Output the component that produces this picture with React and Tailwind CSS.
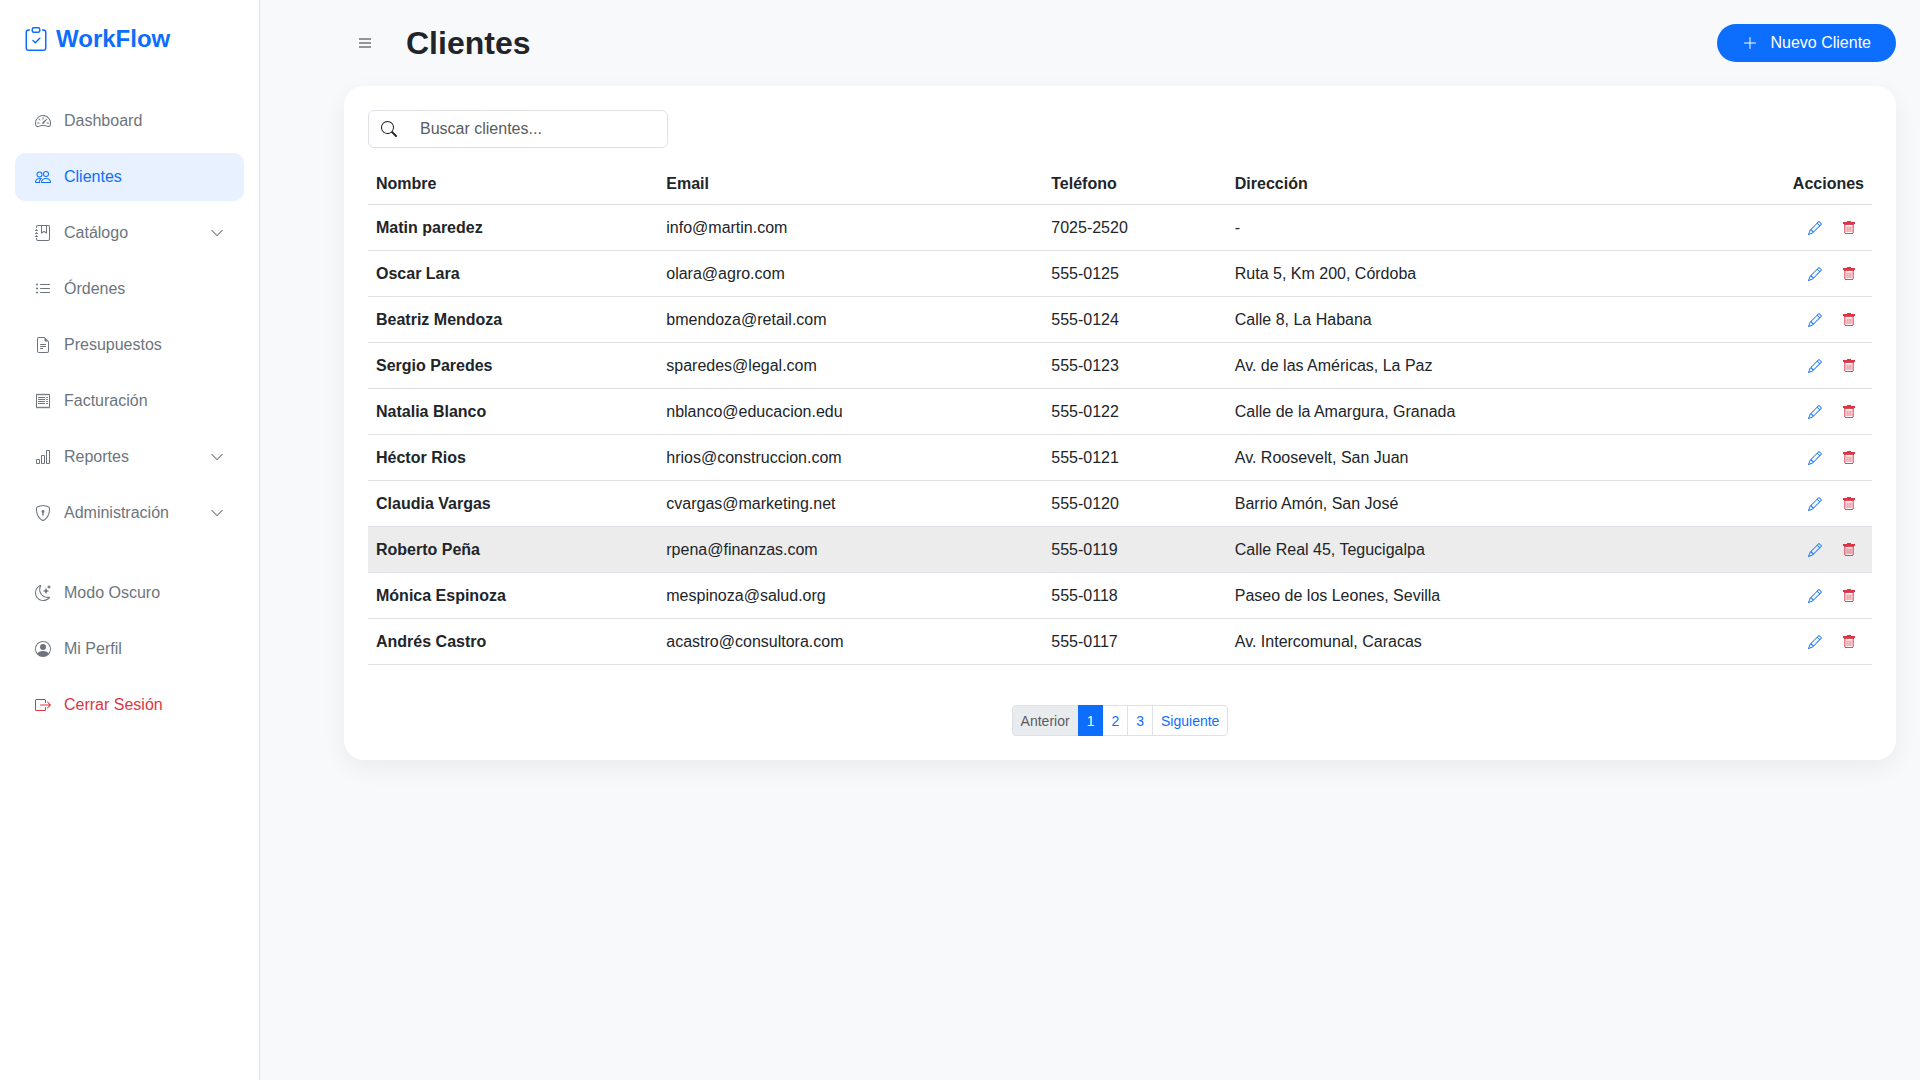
import { useState } from 'react';
import clsx from 'clsx';
import {
  BsBarChart, BsBoxArrowRight, BsChevronDown, BsClipboardCheck, BsFileEarmarkText, BsJournalBookmark, BsListUl,
  BsMoonStars, BsPencil, BsPeople, BsPersonCircle, BsPlusLg, BsReceipt, BsSearch, BsShieldLock, BsSpeedometer2,
} from 'react-icons/bs';

const mainLinks = [
  { icon: BsSpeedometer2, label: 'Dashboard' },
  { icon: BsPeople, label: 'Clientes', active: true },
  { icon: BsJournalBookmark, label: 'Catálogo', submenu: true },
  { icon: BsListUl, label: 'Órdenes' },
  { icon: BsFileEarmarkText, label: 'Presupuestos' },
  { icon: BsReceipt, label: 'Facturación' },
  { icon: BsBarChart, label: 'Reportes', submenu: true },
  { icon: BsShieldLock, label: 'Administración', submenu: true },
];

const userLinks = [
  { icon: BsMoonStars, label: 'Modo Oscuro' },
  { icon: BsPersonCircle, label: 'Mi Perfil' },
  { icon: BsBoxArrowRight, label: 'Cerrar Sesión', danger: true },
];

const clients = [
  { name: 'Matin paredez', email: 'info@martin.com', phone: '7025-2520', address: '-' },
  { name: 'Oscar Lara', email: 'olara@agro.com', phone: '555-0125', address: 'Ruta 5, Km 200, Córdoba' },
  { name: 'Beatriz Mendoza', email: 'bmendoza@retail.com', phone: '555-0124', address: 'Calle 8, La Habana' },
  { name: 'Sergio Paredes', email: 'sparedes@legal.com', phone: '555-0123', address: 'Av. de las Américas, La Paz' },
  { name: 'Natalia Blanco', email: 'nblanco@educacion.edu', phone: '555-0122', address: 'Calle de la Amargura, Granada' },
  { name: 'Héctor Rios', email: 'hrios@construccion.com', phone: '555-0121', address: 'Av. Roosevelt, San Juan' },
  { name: 'Claudia Vargas', email: 'cvargas@marketing.net', phone: '555-0120', address: 'Barrio Amón, San José' },
  { name: 'Roberto Peña', email: 'rpena@finanzas.com', phone: '555-0119', address: 'Calle Real 45, Tegucigalpa' },
  { name: 'Mónica Espinoza', email: 'mespinoza@salud.org', phone: '555-0118', address: 'Paseo de los Leones, Sevilla' },
  { name: 'Andrés Castro', email: 'acastro@consultora.com', phone: '555-0117', address: 'Av. Intercomunal, Caracas' },
];

function TrashIcon({ className }) {
  return (
    <svg viewBox="0 0 14 14" className={className} fill="currentColor">
      <path d="M5 0h4v1h4v2H1V1h4z" />
      <path d="M2 3h10v1H2zM3 12h8v1H3z" opacity="0.9" />
      <path d="M2 4h1.6v8H2zM10.4 4H12v8h-1.6z" opacity="0.65" />
      <path d="M4.6 5.5h1V11h-1zM6.5 5.5h1V11h-1zM8.4 5.5h1V11h-1z" opacity="0.7" />
    </svg>
  );
}

function NavItem({ icon: Icon, label, active, submenu, danger }) {
  return (
    <li>
      <a
        href="#"
        className={clsx(
          'flex h-12 items-center gap-[13px] rounded-[10px] px-5',
          active && 'bg-[#e7f1ff] text-[#0d6efd]',
          danger && 'text-[#dc3545]',
          !active && !danger && 'text-[#6c757d] hover:bg-gray-50'
        )}
      >
        <Icon className="size-4 shrink-0" />
        <span className="flex-1">{label}</span>
        {submenu && <BsChevronDown className="size-3.5" />}
      </a>
    </li>
  );
}

function Sidebar() {
  return (
    <aside className="w-[260px] shrink-0 border-r border-[#dee2e6] bg-white">
      <a href="#" className="flex h-[77px] items-center gap-2 px-6 text-2xl font-bold text-[#0d6efd]">
        <BsClipboardCheck className="size-6" />
        WorkFlow
      </a>
      <nav className="flex flex-col gap-8 px-[15px] pt-5">
        <ul className="flex flex-col gap-2">
          {mainLinks.map(link => <NavItem key={link.label} {...link} />)}
        </ul>
        <ul className="flex flex-col gap-2">
          {userLinks.map(link => <NavItem key={link.label} {...link} />)}
        </ul>
      </nav>
    </aside>
  );
}

function Pagination() {
  const link = 'h-full border border-[#dee2e6] px-2 text-[#0d6efd]';
  return (
    <nav aria-label="Paginación" className="flex h-[31px] justify-center text-sm">
      <button disabled className="h-full rounded-l border border-[#dee2e6] bg-[#e9ecef] px-2 text-[#595c5f]">Anterior</button>
      <button className="-ml-px h-full border border-[#0d6efd] bg-[#0d6efd] px-2 text-white">1</button>
      <button className={clsx(link, 'border-l-0')}>2</button>
      <button className={clsx(link, '-ml-px')}>3</button>
      <button className={clsx(link, '-ml-px rounded-r')}>Siguiente</button>
    </nav>
  );
}

export default function App() {
  const [search, setSearch] = useState('');
  const rows = clients.filter(c => c.name.toLowerCase().includes(search.toLowerCase()));
  const cell = 'border-b border-[#dee2e6] px-2';

  return (
    <div className="flex min-h-screen bg-[#f8f9fb] font-['Liberation_Sans',Arial,sans-serif] text-base text-[#212529]">
      <Sidebar />

      <main className="min-w-0 flex-1 py-6 pr-6 pl-[84px]">
        <header className="mb-6 flex h-[38px] items-center">
          <button aria-label="Alternar menú" className="px-[15px] text-[#949597]">
            <svg viewBox="0 0 12 10" className="h-[10px] w-3" fill="currentColor">
              <path d="M0 0h12v2H0zM0 4h12v2H0zM0 8h12v2H0z" />
            </svg>
          </button>
          <h1 className="ml-5 flex-1 text-[32px] leading-[38px] font-bold">Clientes</h1>
          <button className="flex h-[38px] items-center gap-[13px] rounded-full bg-[#0d6efd] px-[25px] text-white">
            <BsPlusLg className="size-4" />
            Nuevo Cliente
          </button>
        </header>

        <section className="rounded-[20px] bg-white p-6 shadow-[0_8px_24px_rgba(0,0,0,0.06)]">
          <label className="mb-4 flex h-[38px] w-[300px] items-center rounded-md border border-[#dee2e6] px-3">
            <BsSearch className="size-4 shrink-0" />
            <input
              type="text"
              aria-label="Buscar clientes"
              placeholder="Buscar clientes..."
              value={search}
              onChange={e => setSearch(e.target.value)}
              className="ml-[23px] min-w-0 flex-1 outline-none placeholder:text-[#595c5f]"
            />
          </label>

          <table className="mb-10 w-full table-fixed border-separate border-spacing-0 text-left">
            <thead>
              <tr className="h-[41px]">
                <th className={clsx(cell, 'w-[19.3%]')}>Nombre</th>
                <th className={clsx(cell, 'w-[25.6%]')}>Email</th>
                <th className={clsx(cell, 'w-[12.2%]')}>Teléfono</th>
                <th className={cell}>Dirección</th>
                <th className={clsx(cell, 'w-[10%] text-right')}>Acciones</th>
              </tr>
            </thead>
            <tbody>
              {rows.map(client => (
                <tr key={client.phone} className={clsx('h-[46px]', client.name === 'Roberto Peña' && 'bg-[#ececec]')}>
                  <td className={clsx(cell, 'font-bold')}>{client.name}</td>
                  <td className={cell}>{client.email}</td>
                  <td className={cell}>{client.phone}</td>
                  <td className={cell}>{client.address}</td>
                  <td className={cell}>
                    <div className="flex justify-end gap-1">
                      <button aria-label={`Editar ${client.name}`} className="px-2 text-[#0d6efd]">
                        <BsPencil className="size-3.5" />
                      </button>
                      <button aria-label={`Eliminar ${client.name}`} className="px-2 text-[#dc3545]">
                        <TrashIcon className="size-3.5" />
                      </button>
                    </div>
                  </td>
                </tr>
              ))}
            </tbody>
          </table>

          <Pagination />
        </section>
      </main>
    </div>
  );
}
